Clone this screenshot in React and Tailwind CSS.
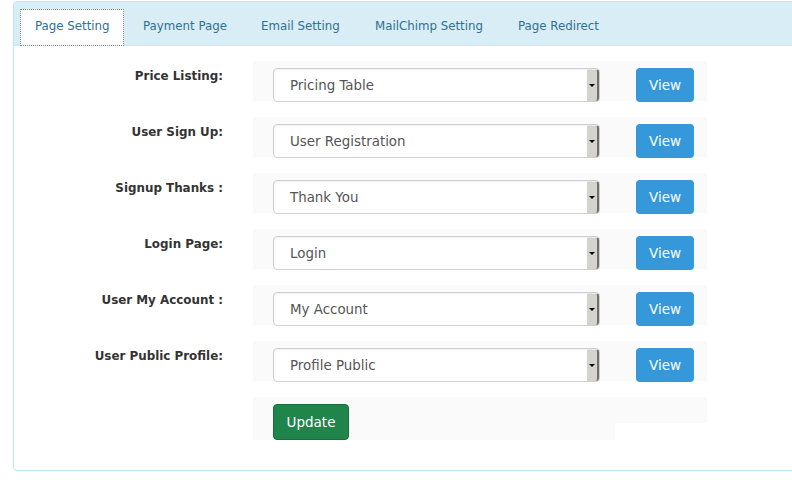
import React from "react";

const tabs = [
  ["Page Setting", "w-[104px]"],
  ["Payment Page", "w-[114px]"],
  ["Email Setting", "w-[110px]"],
  ["MailChimp Setting", "w-[139px]"],
  ["Page Redirect", "w-[110px]"],
];
const rows = [
  ["Price Listing:", "Pricing Table"],
  ["User Sign Up:", "User Registration"],
  ["Signup Thanks :", "Thank You"],
  ["Login Page:", "Login"],
  ["User My Account :", "My Account"],
  ["User Public Profile:", "Profile Public"],
];

function Select({ value }) {
  return (
    <div className="relative w-[327px] h-[34px] bg-white border border-[#cfcfcf] rounded-[4px] shadow-[inset_0_1px_1px_rgba(0,0,0,0.06)] flex items-center">
      <span className="pl-[16px] pt-[2px] text-[13.4px] text-[#555]">{value}</span>
      <div className="absolute right-0 top-0 bottom-0 w-[12px] bg-[#d6d3ce] border-r-2 border-[#6e6e6e] border-t border-t-[#e8e6e2] flex items-center justify-center rounded-r-[3px]">
        <div className="w-0 h-0 border-l-[3px] border-r-[3px] border-t-[3px] border-l-transparent border-r-transparent border-t-black ml-[-1px]" />
      </div>
    </div>
  );
}

export default function App() {
  return (
    <div className="w-[792px] h-[483px] bg-white overflow-hidden pl-[13px] pt-[1px]" style={{ fontFamily: '"DejaVu Sans", sans-serif' }}>
      <div className="w-[800px] h-[470px] border border-[#bce8f1] rounded-[4px] overflow-hidden">
        <div className="h-[44px] bg-[#d9edf7] border-b border-[#c6e6f0] flex items-end pl-[6px]">
          {tabs.map(([t, w], i) => (
            <div
              key={t}
              className={
                w +
                " h-[37px] -mb-px mr-[4px] pl-[14px] pb-[1px] flex items-center whitespace-nowrap text-[11.8px] text-[#31708f] " +
                (i === 0 ? "bg-white border border-dotted border-[#7a8a94]" : "border border-transparent")
              }
            >
              {t}
            </div>
          ))}
        </div>
        <div className="pt-[15px]">
          {rows.map(([label, value]) => (
            <div key={label} className="flex mb-[16px]">
              <div className="w-[209px] text-right pt-[8px] text-[11.9px] leading-[14px] font-bold text-[#333]">{label}</div>
              <div className="ml-[30px] w-[454px] h-[40px] bg-[#fafafa] pt-[7px] pl-[20px] flex items-start">
                <Select value={value} />
                <button className="ml-[36px] w-[58px] h-[34px] bg-[#3498db] rounded-[4px] text-white text-[13.5px]">View</button>
              </div>
            </div>
          ))}
          <div className="flex">
            <div className="w-[209px]" />
            <div className="ml-[30px] flex items-start">
              <div className="w-[362px] h-[43px] bg-[#fafafa] pt-[7px] pl-[20px]">
                <button className="w-[76px] h-[36px] bg-[#1f854b] border border-[#196e3d] rounded-[4px] text-white text-[13.5px]">Update</button>
              </div>
              <div className="w-[92px] h-[26px] bg-[#fafafa]" />
            </div>
          </div>
        </div>
      </div>
    </div>
  );
}
